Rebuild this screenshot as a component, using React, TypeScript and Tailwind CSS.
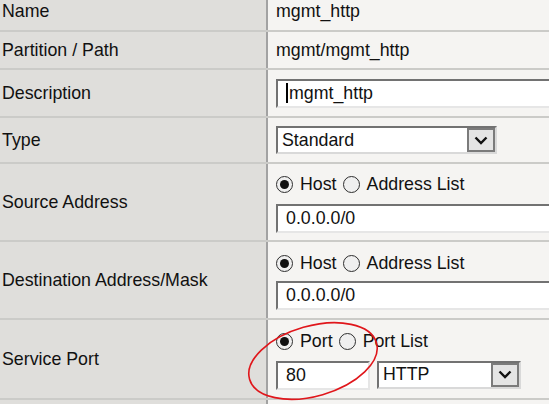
import type { ReactNode } from "react";

const font = { fontFamily: '"Liberation Sans", Arial, sans-serif' };

const Radio = ({ checked }: { checked?: boolean }) => (
  <span className="flex h-[17px] w-[17px] shrink-0 items-center justify-center rounded-full border-[1.7px] border-[#2e2e2e] bg-[#efefef]">
    {checked && <span className="h-[9px] w-[9px] rounded-full bg-[#111]" />}
  </span>
);

const Chevron = () => (
  <svg width="14" height="9" viewBox="0 0 14 9" fill="none">
    <path d="M1.5 1.5 L7 7 L12.5 1.5" stroke="#111" strokeWidth="2.4" />
  </svg>
);

const Input = ({ value, className = "", caret }: { value: string; className?: string; caret?: boolean }) => (
  <div
    className={`flex h-[29px] items-center border-2 border-t-[#727272] border-l-[#727272] border-b-[#e6e6e6] border-r-[#e6e6e6] bg-white pl-[8px] ${className}`}
  >
    {caret && <span className="mr-[1px] h-[20px] w-[2px] bg-black" />}
    <span>{value}</span>
  </div>
);

const Select = ({ value, className = "" }: { value: string; className?: string }) => (
  <div
    className={`flex h-[28px] items-center justify-between border-2 border-t-[#727272] border-l-[#727272] border-b-[#d9d9d9] border-r-[#d9d9d9] bg-white pl-[4px] ${className}`}
  >
    <span>{value}</span>
    <div className="flex h-[24px] w-[28px] items-center justify-center border-2 border-[#7b7b7b] bg-[#e4e4e4]">
      <Chevron />
    </div>
  </div>
);

const RadioPair = ({ a, b }: { a: string; b: string }) => (
  <div className="flex h-[20px] items-center">
    <Radio checked />
    <span className="ml-[7px] mr-[6px]">{a}</span>
    <Radio />
    <span className="ml-[7px]">{b}</span>
  </div>
);

const Row = ({ label, h, children }: { label: string; h: string; children: ReactNode }) => (
  <div className={`flex border-b-2 border-[#cbcbc8] ${h}`}>
    <div className="flex w-[268px] shrink-0 items-center border-r-2 border-[#a2a2a2] bg-[#dfdedb] pl-[2px]">
      {label}
    </div>
    <div className="flex min-w-0 flex-1 flex-col justify-center overflow-hidden bg-[#f5f4f2] pl-[8px]">{children}</div>
  </div>
);

export default function App() {
  return (
    <div className="relative h-[404px] w-[549px] overflow-hidden text-[17.8px] text-[#111]" style={font}>
      <div className="-mt-[7px]">
        <Row label="Name" h="h-[39px]">
          <span>mgmt_http</span>
        </Row>
        <Row label="Partition / Path" h="h-[38px]">
          <span>mgmt/mgmt_http</span>
        </Row>
        <Row label="Description" h="h-[48px]">
          <Input value="mgmt_http" caret className="w-[320px]" />
        </Row>
        <Row label="Type" h="h-[46px]">
          <div className="flex">
            <Select value="Standard" className="w-[221px]" />
          </div>
        </Row>
        <Row label="Source Address" h="h-[78px]">
          <div className="flex flex-col gap-[9px] pt-[3px]">
            <RadioPair a="Host" b="Address List" />
            <Input value="0.0.0.0/0" className="w-[320px]" />
          </div>
        </Row>
        <Row label="Destination Address/Mask" h="h-[78px]">
          <div className="flex flex-col gap-[8px] pt-[3px]">
            <RadioPair a="Host" b="Address List" />
            <Input value="0.0.0.0/0" className="w-[320px]" />
          </div>
        </Row>
        <Row label="Service Port" h="h-[80px]">
          <div className="flex flex-col gap-[9px] pt-[3px]">
            <RadioPair a="Port" b="Port List" />
            <div className="flex gap-[7px]">
              <Input value="80" className="h-[28px] w-[94px]" />
              <Select value="HTTP" className="w-[144px]" />
            </div>
          </div>
        </Row>
        <Row label="" h="h-[40px]">
          <span />
        </Row>
      </div>
      <svg className="pointer-events-none absolute left-0 top-0" width="549" height="404">
        <ellipse cx="313" cy="361" rx="66" ry="35" transform="rotate(-16 313 361)" fill="none" stroke="#e0161b" strokeWidth="1.6" />
      </svg>
    </div>
  );
}
